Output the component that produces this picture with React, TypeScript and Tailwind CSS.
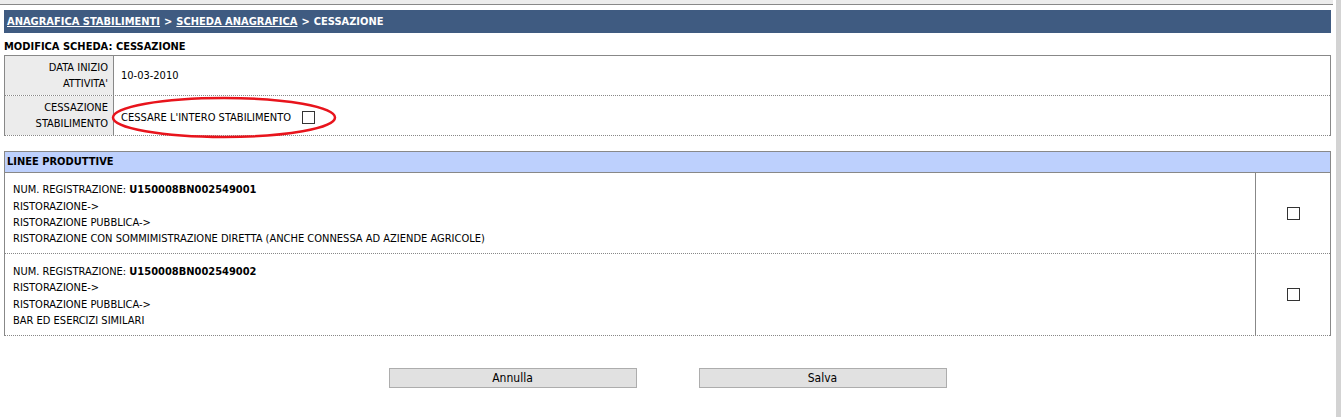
import { useState } from 'react'

const font = "font-['DejaVu_Sans_Condensed','Liberation_Sans',sans-serif]"

const linee = [
  {
    num: 'U150008BN002549001',
    righe: ['RISTORAZIONE->', 'RISTORAZIONE PUBBLICA->', 'RISTORAZIONE CON SOMMIMISTRAZIONE DIRETTA (ANCHE CONNESSA AD AZIENDE AGRICOLE)'],
  },
  {
    num: 'U150008BN002549002',
    righe: ['RISTORAZIONE->', 'RISTORAZIONE PUBBLICA->', 'BAR ED ESERCIZI SIMILARI'],
  },
]

function Check({ checked, onChange }: { checked: boolean; onChange: () => void }) {
  return (
    <input
      type="checkbox"
      checked={checked}
      onChange={onChange}
      className="m-0 block h-[13px] w-[13px] appearance-none border border-[#333] bg-white checked:bg-[#333]"
    />
  )
}

export default function App() {
  const [cessaTutto, setCessaTutto] = useState(false)
  const [selezionate, setSelezionate] = useState<boolean[]>([false, false])

  return (
    <div className={`flex h-[417px] w-full bg-white text-[11px] leading-[16px] text-black ${font}`}>
      <div className="flex-1">
        <div className="mr-[3px] h-[5px] border-b border-[#888] bg-[#ececec]" />

        <div className="pl-[4px] pr-[5px] pt-[5px]">
          <div className="flex h-[23px] items-center bg-[#3f5b81] px-[3px] font-bold text-white">
            <a href="#" className="underline">ANAGRAFICA STABILIMENTI</a>
            <span className="mx-[4px]">&gt;</span>
            <a href="#" className="underline">SCHEDA ANAGRAFICA</a>
            <span className="mx-[4px]">&gt;</span>
            <span>CESSAZIONE</span>
          </div>

          <div className="mt-[6px] h-[16px] font-bold">MODIFICA SCHEDA: CESSAZIONE</div>

          <div className="border-x border-t border-[#888]">
            <div className="flex h-[40px] border-b border-dotted border-[#888]">
              <div className="flex w-[109px] flex-col items-end justify-center border-r border-[#888] bg-[#ececec] pr-[5px] text-right">
                <span>DATA INIZIO</span>
                <span>ATTIVITA'</span>
              </div>
              <div className="flex items-center pl-[7px]">10-03-2010</div>
            </div>
            <div className="relative flex h-[40px] border-b border-dotted border-[#888]">
              <div className="flex w-[109px] flex-col items-end justify-center border-r border-[#888] bg-[#ececec] pr-[5px] text-right">
                <span>CESSAZIONE</span>
                <span>STABILIMENTO</span>
              </div>
              <div className="flex items-center gap-[11px] pl-[7px] pt-[4px]">
                <span>CESSARE L'INTERO STABILIMENTO</span>
                <Check checked={cessaTutto} onChange={() => setCessaTutto((prev) => !prev)} />
              </div>
              <svg className="pointer-events-none absolute left-[105px] top-0" width="228" height="44" viewBox="0 0 228 44">
                <ellipse cx="114" cy="21.5" rx="111" ry="19.5" fill="none" stroke="#e8141c" strokeWidth="2.5" />
              </svg>
            </div>
          </div>

          <div className="mt-[15px] border-x border-t border-[#888]">
            <div className="flex h-[21px] items-center border-b border-[#888] bg-[#bdd0fd] pl-[2px] font-bold">
              LINEE PRODUTTIVE
            </div>
            {linee.map((linea, i) => (
              <div
                key={linea.num}
                className={`flex border-b border-dotted border-[#888] ${i === 0 ? 'h-[81px]' : 'h-[82px]'}`}
              >
                <div className="flex flex-1 flex-col justify-center pl-[8px] pt-[4px] leading-[16.3px]">
                  <div>
                    NUM. REGISTRAZIONE: <span className="font-bold">{linea.num}</span>
                  </div>
                  {linea.righe.map((riga) => (
                    <div key={riga}>{riga}</div>
                  ))}
                </div>
                <div className="flex w-[75px] items-center justify-center border-l border-[#888]">
                  <Check
                    checked={selezionate[i]}
                    onChange={() => setSelezionate((prev) => prev.map((v, j) => (j === i ? !v : v)))}
                  />
                </div>
              </div>
            ))}
          </div>

          <div className="mt-[32px] flex justify-center gap-[62px]">
            <button className="h-[20px] w-[248px] border border-[#adadad] bg-[#e1e1e1] text-[12px] leading-[18px]">
              Annulla
            </button>
            <button className="h-[20px] w-[248px] border border-[#adadad] bg-[#e1e1e1] text-[12px] leading-[18px]">
              Salva
            </button>
          </div>
        </div>
      </div>
      <div className="w-[5px] bg-[#d3d3d3]" />
    </div>
  )
}
